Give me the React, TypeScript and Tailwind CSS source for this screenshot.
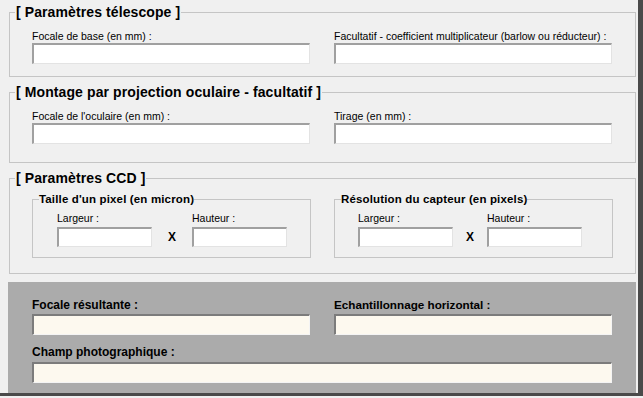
import type { ReactNode } from "react";

const font = { fontFamily: '"Liberation Sans", Arial, sans-serif' };

function TextBox({ w = "w-full", h = "h-[21px]" }: { w?: string; h?: string }) {
  return (
    <div
      className={`${w} ${h} bg-white border-t-2 border-l-2 border-b border-r border-t-[#a0a0a0] border-l-[#a0a0a0] border-b-[#e3e3e3] border-r-[#e3e3e3]`}
    />
  );
}

function ResultBox() {
  return (
    <div className="w-full h-[21px] bg-[#fdf9ef] border-t-2 border-l-2 border-b border-r border-t-[#7c7c7c] border-l-[#7c7c7c] border-b-[#f4f4f4] border-r-[#f4f4f4]" />
  );
}

function Group({ title, children, className }: { title: string; children: ReactNode; className: string }) {
  return (
    <fieldset className={`ml-[9px] w-[627px] border border-[#c5c5c5] ${className}`}>
      <legend className="ml-[5px] px-[1px] text-[14px] leading-[17px] tracking-[0.1px] font-bold text-black">{title}</legend>
      {children}
    </fieldset>
  );
}

function Field({ label }: { label: string }) {
  return (
    <div className="w-[278px] flex flex-col">
      <span className="text-[10.5px] leading-[13px] whitespace-nowrap text-black">{label}</span>
      <TextBox />
    </div>
  );
}

function SizeGroup({ title, pl, gap }: { title: string; pl: string; gap: string }) {
  return (
    <fieldset className="w-[279px] border border-[#c5c5c5]">
      <legend className="ml-[6px] text-[11.5px] leading-[13px] tracking-[0.15px] font-bold whitespace-nowrap text-black">{title}</legend>
      <div className={`flex items-end pt-[6px] pb-[10px] ${pl} ${gap}`}>
        <div className="flex flex-col">
          <span className="text-[10.5px] leading-[13px] text-black">Largeur :</span>
          <div className="mt-[2px]">
            <TextBox w="w-[95px]" h="h-[20px]" />
          </div>
        </div>
        <span className="h-[20px] flex items-center text-[12px] font-bold text-black">X</span>
        <div className="flex flex-col">
          <span className="text-[10.5px] leading-[13px] text-black">Hauteur :</span>
          <div className="mt-[2px]">
            <TextBox w="w-[95px]" h="h-[20px]" />
          </div>
        </div>
      </div>
    </fieldset>
  );
}

export default function App() {
  return (
    <div className="w-[643px] h-[398px] bg-[#f0f0f0] overflow-hidden" style={font}>
      <div className="w-[643px] h-[396px] border-r-[5px] border-b-[3px] border-[#4a4a4a] pt-[4px]">
        {/* Paramètres télescope */}
        <Group title="[ Paramètres télescope ]" className="">
          <div className="flex gap-[24px] px-[22px] pt-[9px] pb-[12px]">
            <Field label="Focale de base (en mm) :" />
            <Field label="Facultatif - coefficient multiplicateur (barlow ou réducteur) :" />
          </div>
        </Group>

        {/* Montage par projection */}
        <Group title="[ Montage par projection oculaire - facultatif ]" className="mt-[7px]">
          <div className="flex gap-[24px] px-[22px] pt-[9px] pb-[18px]">
            <Field label="Focale de l'oculaire (en mm) :" />
            <Field label="Tirage (en mm) :" />
          </div>
        </Group>

        {/* CCD */}
        <Group title="[ Paramètres CCD ]" className="mt-[7px]">
          <div className="flex gap-[23px] px-[22px] pt-[6px] pb-[15px]">
            <SizeGroup title="Taille d'un pixel (en micron)" pl="pl-[24px]" gap="gap-[16px]" />
            <SizeGroup title="Résolution du capteur (en pixels)" pl="pl-[23px]" gap="gap-[13px]" />
          </div>
        </Group>

        {/* Résultats */}
        <div className="ml-[8px] mt-[8px] w-[628px] bg-[#ababab] px-[24px] pt-[16px] pb-[10px]">
          <div className="flex gap-[24px]">
            <div className="w-[278px] flex flex-col">
              <span className="text-[12px] leading-[14px] font-bold text-black">Focale résultante :</span>
              <div className="mt-[2px]">
                <ResultBox />
              </div>
            </div>
            <div className="w-[278px] flex flex-col">
              <span className="text-[11.7px] leading-[14px] font-bold text-black">Echantillonnage horizontal :</span>
              <div className="mt-[2px]">
                <ResultBox />
              </div>
            </div>
          </div>
          <div className="mt-[10px] w-[580px] flex flex-col">
            <span className="text-[12px] leading-[14px] font-bold text-black">Champ photographique :</span>
            <div className="mt-[3px]">
              <ResultBox />
            </div>
          </div>
        </div>
      </div>
    </div>
  );
}
